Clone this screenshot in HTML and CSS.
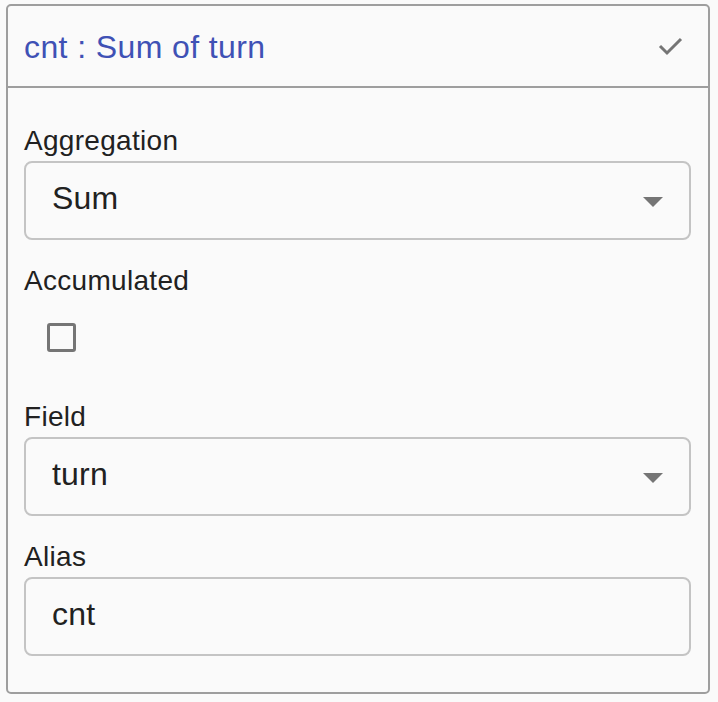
FILE: index.html
```html
<!DOCTYPE html>
<html lang="en">
<head>
<meta charset="utf-8">
<title>Metric editor</title>
<link rel="stylesheet" href="styles.css">
</head>
<body>
<div class="card">
  <div class="card-header">
    <span class="title">cnt : Sum of turn</span>
    <svg class="check" width="26" height="20" viewBox="0 0 26 20" aria-hidden="true">
      <polyline points="2,9 9,16 23,2" fill="none" stroke="#757575" stroke-width="3"/>
    </svg>
  </div>
  <div class="card-body">
    <div class="field">
      <div class="label">Aggregation</div>
      <div class="control select">
        <span class="value">Sum</span>
        <span class="arrow"></span>
      </div>
    </div>
    <div class="field">
      <div class="label">Accumulated</div>
      <div class="checkbox-row"><span class="checkbox"></span></div>
    </div>
    <div class="field">
      <div class="label">Field</div>
      <div class="control select">
        <span class="value">turn</span>
        <span class="arrow"></span>
      </div>
    </div>
    <div class="field">
      <div class="label">Alias</div>
      <div class="control input">
        <span class="value">cnt</span>
      </div>
    </div>
  </div>
</div>
</body>
</html>
```
FILE: styles.css
```css
html, body {
  margin: 0;
  padding: 0;
  background: #fafafa;
}
body {
  font-family: "Liberation Sans", Arial, Helvetica, sans-serif;
  color: #212121;
}
.card {
  box-sizing: border-box;
  margin: 4px 0 0 6px;
  width: 704px;
  height: 690px;
  border: 2px solid #9e9e9e;
  border-radius: 5px;
  background: #fafafa;
  display: flex;
  flex-direction: column;
}
.card-header {
  height: 80px;
  border-bottom: 2px solid #9e9e9e;
  display: flex;
  align-items: center;
  justify-content: space-between;
  padding: 0 24px 0 16px;
}
.title {
  font-size: 32px;
  color: #3f51b5;
  letter-spacing: 0.4px;
  padding-top: 2px;
}
.check {
  display: block;
  margin-top: 1px;
}
.card-body {
  padding: 37px 17px 0 16px;
  display: flex;
  flex-direction: column;
  gap: 25px;
}
.field {
  display: flex;
  flex-direction: column;
  gap: 4px;
}
.label {
  font-size: 28px;
  line-height: 32px;
  letter-spacing: 0.3px;
}
.control {
  box-sizing: border-box;
  height: 79px;
  border: 2px solid #c4c4c4;
  border-radius: 8px;
  display: flex;
  align-items: center;
  justify-content: space-between;
  padding: 0 26px 0 26px;
}
.value {
  font-size: 32px;
  padding-bottom: 4px;
  letter-spacing: 0.2px;
}
.arrow {
  width: 0;
  height: 0;
  border-left: 10px solid transparent;
  border-right: 10px solid transparent;
  border-top: 10px solid #757575;
  margin-top: 2px;
}
.checkbox-row {
  padding: 22px 0 0 23px;
  height: 75px;
  box-sizing: border-box;
}
.checkbox {
  display: block;
  box-sizing: border-box;
  width: 29px;
  height: 29px;
  border: 3px solid #757575;
  border-radius: 3px;
}
```
